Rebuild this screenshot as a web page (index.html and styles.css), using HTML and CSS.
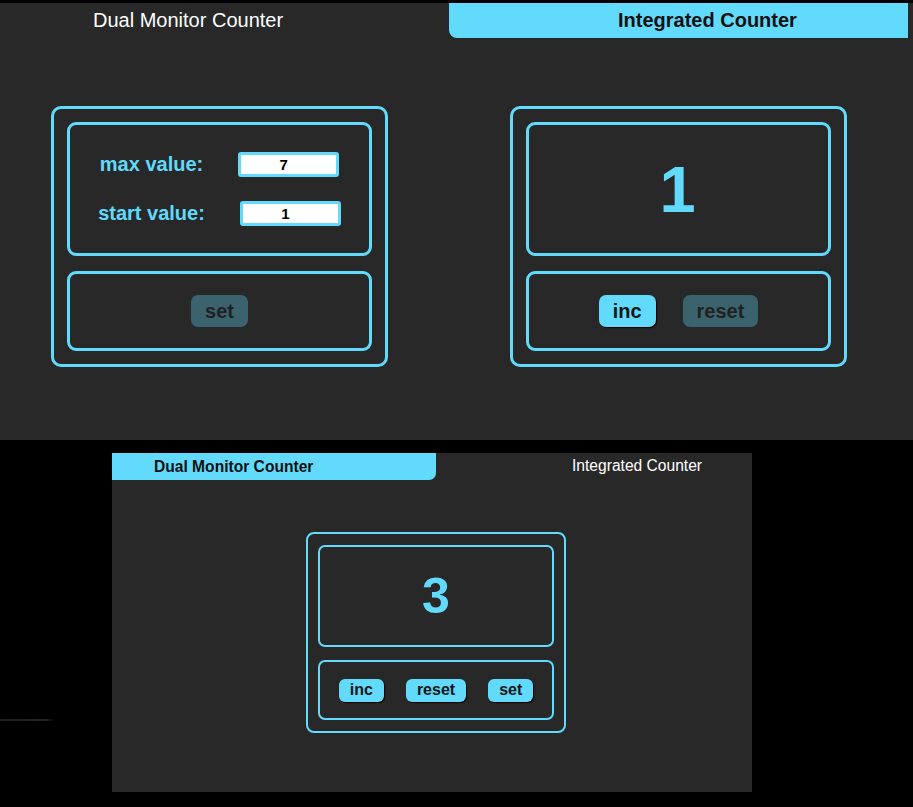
FILE: index.html
```html
<!DOCTYPE html>
<html lang="en">
<head>
<meta charset="utf-8">
<title>Counters</title>
<link rel="stylesheet" href="styles.css">
</head>
<body>
<div class="page">
  <section class="shot shot-top">
    <div class="tabs tabs-top">
      <div class="tab tab-top-left">Dual Monitor Counter</div>
      <div class="tab tab-top-right active">Integrated Counter</div>
    </div>
    <div class="counters">
      <div class="counter counter-big">
        <div class="box settings">
          <div class="row">
            <label class="field-label">max value:</label>
            <input class="field-input" type="number" value="7">
          </div>
          <div class="row">
            <label class="field-label">start value:</label>
            <input class="field-input" type="number" value="1">
          </div>
        </div>
        <div class="box controls">
          <button class="btn btn-big" disabled>set</button>
        </div>
      </div>
      <div class="counter counter-big">
        <div class="box display">
          <span class="value value-big">1</span>
        </div>
        <div class="box controls">
          <button class="btn btn-big">inc</button>
          <button class="btn btn-big" disabled>reset</button>
        </div>
      </div>
    </div>
  </section>

  <div class="lower">
    <div class="stray-line"></div>
    <section class="shot shot-bottom">
      <div class="tabs tabs-bottom">
        <div class="tab tab-bottom-left active">Dual Monitor Counter</div>
        <div class="tab tab-bottom-right">Integrated Counter</div>
      </div>
      <div class="counter counter-small">
        <div class="box-s display-s">
          <span class="value value-small">3</span>
        </div>
        <div class="box-s controls-s">
          <button class="btn btn-small">inc</button>
          <button class="btn btn-small">reset</button>
          <button class="btn btn-small">set</button>
        </div>
      </div>
    </section>
  </div>
</div>
</body>
</html>
```

FILE: styles.css
```css
* {
  box-sizing: border-box;
}

html, body {
  margin: 0;
  padding: 0;
  background: #000;
}

body {
  font-family: "Liberation Sans", Arial, sans-serif;
  width: 913px;
  height: 807px;
  overflow: hidden;
}

.page {
  padding-top: 3px;
}

.shot {
  background: #282828;
}

/* ---------- top screenshot ---------- */
.shot-top {
  width: 913px;
  height: 437px;
}

.tabs {
  display: flex;
}

.tabs-top {
  height: 35px;
}

.tab {
  white-space: nowrap;
}

.tab-top-left {
  width: 449px;
  padding-left: 93px;
  line-height: 35px;
  font-size: 20px;
  color: #fff;
}

.tab-top-right {
  width: 459px;
  padding-left: 169px;
  line-height: 35px;
  font-size: 20px;
  font-weight: bold;
  color: #111;
  background: #61dafb;
  border-bottom-left-radius: 8px;
}

.counters {
  display: flex;
  gap: 122px;
  margin-top: 68px;
  padding-left: 51px;
}

.counter-big {
  width: 337px;
  height: 261px;
  border: 3px solid #61dafb;
  border-radius: 10px;
  padding: 13px;
  display: flex;
  flex-direction: column;
  gap: 15px;
}

.box {
  border: 3px solid #61dafb;
  border-radius: 9px;
  width: 305px;
}

.settings,
.display {
  height: 134px;
}

.settings {
  display: flex;
  flex-direction: column;
  justify-content: center;
  gap: 24px;
}

.row {
  display: flex;
  justify-content: center;
  align-items: center;
  gap: 35px;
}

.field-label {
  font-size: 20px;
  font-weight: bold;
  color: #61dafb;
}

.field-input {
  width: 101px;
  height: 25px;
  border: 3px solid #61dafb;
  border-radius: 3px;
  background: #fff;
  font-family: "Liberation Sans", Arial, sans-serif;
  font-size: 15px;
  font-weight: bold;
  color: #000;
  text-align: center;
  padding: 0 10px 0 0;
  -moz-appearance: textfield;
}

.field-input::-webkit-outer-spin-button,
.field-input::-webkit-inner-spin-button {
  -webkit-appearance: none;
  margin: 0;
}

.controls {
  height: 80px;
  display: flex;
  justify-content: center;
  align-items: center;
  gap: 27px;
}

.display {
  display: flex;
  justify-content: center;
  align-items: center;
}

.value {
  font-weight: bold;
  color: #61dafb;
  line-height: 1;
}

.value-big {
  font-size: 65px;
  margin-left: -2px;
}

.btn {
  font-family: "Liberation Sans", Arial, sans-serif;
  font-weight: bold;
  color: #151515;
  background: #61dafb;
  border: none;
  box-shadow: 1px 1px 1px #000;
  padding: 0;
  cursor: pointer;
}

.btn:disabled {
  opacity: 0.33;
  box-shadow: none;
  cursor: default;
}

.btn-big {
  height: 32px;
  padding: 0 14px;
  font-size: 20px;
  border-radius: 7px;
}

/* ---------- bottom screenshot ---------- */
.lower {
  display: flex;
  align-items: flex-start;
  margin-top: 13px;
}

.stray-line {
  width: 53px;
  height: 2px;
  margin-top: 266px;
  background: linear-gradient(to right, #1c1c1c, #232323 85%, #0a0a0a);
}

.shot-bottom {
  margin-left: 59px;
  width: 640px;
  height: 339px;
}

.tabs-bottom {
  height: 27px;
}

.tab-bottom-left {
  width: 324px;
  padding-left: 42px;
  line-height: 27px;
  font-size: 15.6px;
  font-weight: bold;
  color: #111;
  background: #61dafb;
  border-bottom-right-radius: 7px;
}

.tab-bottom-right {
  padding-left: 136px;
  line-height: 25px;
  font-size: 15.6px;
  color: #fff;
}

.counter-small {
  width: 260px;
  height: 201px;
  margin: 52px 0 0 194px;
  border: 2px solid #61dafb;
  border-radius: 8px;
  padding: 11px 10px;
  display: flex;
  flex-direction: column;
  gap: 13px;
}

.box-s {
  width: 236px;
  border: 2px solid #61dafb;
  border-radius: 7px;
  display: flex;
  justify-content: center;
  align-items: center;
}

.display-s {
  height: 102px;
}

.controls-s {
  height: 60px;
  gap: 22px;
}

.value-small {
  font-size: 50px;
}

.btn-small {
  height: 23px;
  padding: 0 11px;
  font-size: 16px;
  border-radius: 6px;
}
```
